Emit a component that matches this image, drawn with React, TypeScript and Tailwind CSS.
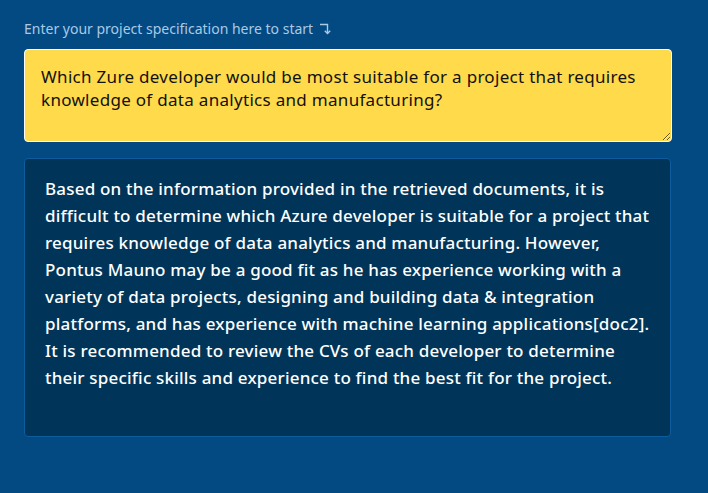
import React, { useState } from 'react';

const ANSWER =
  'Based on the information provided in the retrieved documents, it is difficult to determine which Azure developer is suitable for a project that requires knowledge of data analytics and manufacturing. However, Pontus Mauno may be a good fit as he has experience working with a variety of data projects, designing and building data & integration platforms, and has experience with machine learning applications[doc2]. It is recommended to review the CVs of each developer to determine their specific skills and experience to find the best fit for the project.';

const App = () => {
  const [question, setQuestion] = useState(
    'Which Zure developer would be most suitable for a project that requires knowledge of data analytics and manufacturing?'
  );

  return (
    <div
      className="min-h-screen w-full bg-[#034a82] px-6 pt-[18px] pb-10"
      style={{ fontFamily: '"Noto Sans", "Open Sans", sans-serif' }}
    >
      {/* label */}
      <div className="flex items-center gap-[6px] text-[14px] text-[#a9c9e6]">
        <span>Enter your project specification here to start</span>
        <svg width="12" height="13" viewBox="0 0 12 13" fill="none" stroke="currentColor" strokeWidth="1.4">
          <path d="M1 2.5h7.5v9" />
          <path d="M5.8 8.8l2.7 2.8 2.7-2.8" />
        </svg>
      </div>

      {/* question */}
      <textarea
        value={question}
        onChange={(e) => setQuestion(e.target.value)}
        spellCheck={false}
        className="mt-[10px] block h-[93px] w-[648px] resize-y rounded-[4px] border border-white bg-[#ffda4a] px-4 pt-[15px] pb-2 text-[17px] leading-[23px] tracking-[0.3px] text-[#111] outline-none"
      />

      {/* answer */}
      <div className="mt-4 h-[279px] w-[647px] rounded-[4px] border border-[#0f5c9c] bg-[#003559] pl-5 pr-3 pt-[16px]">
        <p className="text-[17px] font-medium leading-[27px] tracking-[0.2px] text-white">{ANSWER}</p>
      </div>
    </div>
  );
};

export default App;
